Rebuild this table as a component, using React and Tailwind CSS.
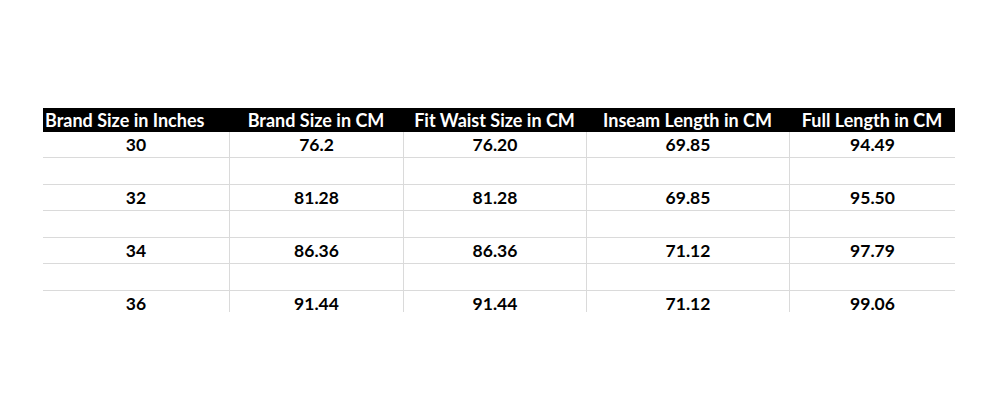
import React from 'react';

const headers = [
	'Brand Size in Inches',
	'Brand Size in CM',
	'Fit Waist Size in CM',
	'Inseam Length in CM',
	'Full Length in CM',
];

// 빈 행이 사이사이 들어가는 사이즈 표
const rows = [
	['30', '76.2', '76.20', '69.85', '94.49'],
	null,
	['32', '81.28', '81.28', '69.85', '95.50'],
	null,
	['34', '86.36', '86.36', '71.12', '97.79'],
	null,
	['36', '91.44', '91.44', '71.12', '99.06'],
];

const cols = 'grid grid-cols-[186px_174px_183px_203px_166px]';

const App = () => {
	return (
		<div className="w-[1000px] h-[400px] bg-white pt-[108px] pl-[43px]" style={{ fontFamily: 'Lato, "Open Sans", sans-serif' }}>
			<div className="w-[912px] h-[204px] overflow-hidden">
				<div className={`${cols} h-[24px] bg-black text-white font-bold text-[18px] leading-[24px]`}>
					{headers.map((h, i) => (
						<div key={h} className={i === 0 ? 'pl-[2px] whitespace-nowrap' : 'text-center whitespace-nowrap'}>
							{h}
						</div>
					))}
				</div>
				{rows.map((r, ri) => (
					<div key={ri} className={`${cols} ${ri % 2 ? 'h-[27px]' : 'h-[26px]'} border-b border-[#dadada] text-black font-bold text-[17.5px]`}>
						{[0, 1, 2, 3, 4].map((ci) => (
							<div key={ci} className={`flex items-center justify-center ${ci > 0 ? 'border-l border-[#dadada]' : ''}`}>
								{r ? r[ci] : ''}
							</div>
						))}
					</div>
				))}
			</div>
		</div>
	);
};

export default App;
